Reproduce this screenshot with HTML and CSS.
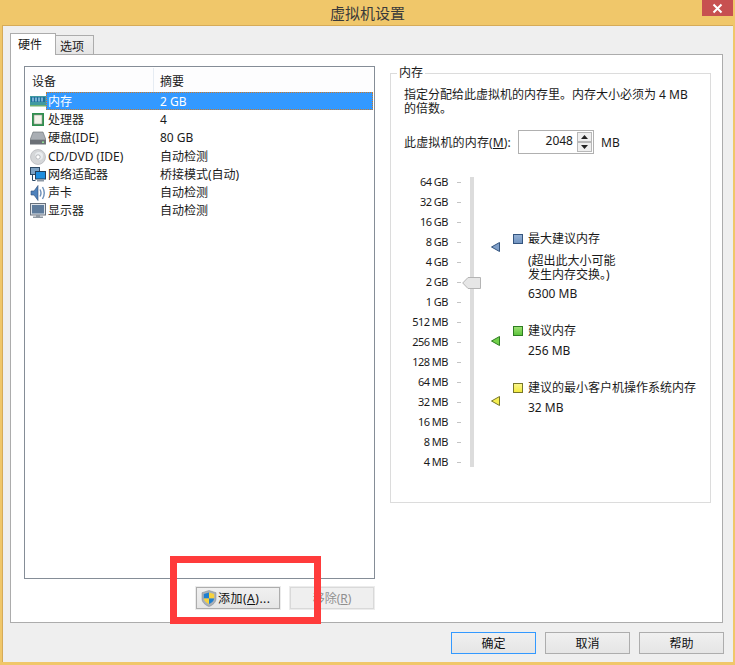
FILE: index.html
```html
<!DOCTYPE html>
<html lang="zh-CN">
<head>
<meta charset="utf-8">
<title>虚拟机设置</title>
<link rel="stylesheet" href="styles.css">
</head>
<body>
<div class="window">
  <header class="titlebar">
    <span class="title">虚拟机设置</span>
    <span class="close"><svg width="11" height="11" viewBox="0 0 11 11"><path d="M1.5 1.5l8 8M9.5 1.5l-8 8" stroke="#fff" stroke-width="2" fill="none"/></svg></span>
  </header>
  <div class="client">
    <div class="tabs">
      <div class="tab active">硬件</div>
      <div class="tab">选项</div>
    </div>
    <div class="panel">
      <div class="left">
        <div class="list">
          <div class="list-head"><span class="col-a">设备</span><span class="col-b">摘要</span></div>
          <div class="row selected">
            <svg class="ico" viewBox="0 0 16 16"><rect x="0" y="2" width="16" height="9" fill="#3f9aa0"/><rect x="1" y="3" width="14" height="5" fill="#1f6f9c"/><path d="M3 3.500v4M6 3.500v4M9 3.500v4M12 3.500v4" stroke="#9fd0e8" stroke-width="1.400"/><path d="M0 11h16v1.500H0z" fill="#6fb06f"/></svg>
            <span class="name">内存</span><span class="val">2 GB</span>
          </div>
          <div class="row">
            <svg class="ico" viewBox="0 0 16 16"><rect x="2" y="1" width="12" height="13" fill="#2f8f4f"/><rect x="4" y="3" width="8" height="9" fill="#f2f2ea" stroke="#9a9a90" stroke-width=".6"/></svg>
            <span class="name">处理器</span><span class="val">4</span>
          </div>
          <div class="row">
            <svg class="ico" viewBox="0 0 16 16"><path d="M3 2h10l3 8H0z" fill="#a9aeb4" stroke="#666b70" stroke-width=".6"/><rect x="0" y="10" width="16" height="4.500" fill="#6b7076"/><rect x="12" y="11.500" width="2" height="1.500" fill="#8fe08f"/></svg>
            <span class="name">硬盘(IDE)</span><span class="val">80 GB</span>
          </div>
          <div class="row">
            <svg class="ico" viewBox="0 0 16 16"><circle cx="8" cy="8" r="7.500" fill="#d4d6d8" stroke="#a8aaae" stroke-width=".6"/><circle cx="9" cy="7" r="4" fill="#e9ecef"/><circle cx="8" cy="8" r="2.200" fill="#fff" stroke="#9a9ca0" stroke-width=".7"/></svg>
            <span class="name">CD/DVD (IDE)</span><span class="val">自动检测</span>
          </div>
          <div class="row">
            <svg class="ico" viewBox="0 0 16 16"><rect x=".5" y=".5" width="9" height="7" fill="#7fa3c4" stroke="#2d4a66"/><path d="M2.500 8v5.500h3" stroke="#2d4a66" fill="none"/><rect x="5.500" y="4.500" width="10" height="7.500" fill="#1f8fe0" stroke="#24405c"/><rect x="7" y="12.500" width="7" height="2" fill="#8d99a6"/></svg>
            <span class="name">网络适配器</span><span class="val">桥接模式(自动)</span>
          </div>
          <div class="row">
            <svg class="ico" viewBox="0 0 16 16"><path d="M1 6h3l4-5.500v15L4 10H1z" fill="#4f82bc" stroke="#2d4a76" stroke-width=".6"/><path d="M10 4.500q2 3.500 0 7M12.500 2q3.500 6 0 12" stroke="#6c8fb8" stroke-width="1.400" fill="none"/></svg>
            <span class="name">声卡</span><span class="val">自动检测</span>
          </div>
          <div class="row">
            <svg class="ico" viewBox="0 0 16 16"><rect x="0.500" y="0.500" width="15" height="11.500" fill="#dfe4ea" stroke="#68717c"/><rect x="2" y="2" width="12" height="8.500" fill="#5f7c9c"/><path d="M6 12h4v1.500H6zM3 13.500h10V15H3z" fill="#8f98a2"/></svg>
            <span class="name">显示器</span><span class="val">自动检测</span>
          </div>
        </div>
        <div class="list-actions">
          <button class="btn add" type="button">
            <svg width="16" height="17" viewBox="0 0 16 17"><path d="M8 .5l7 2.200v6c0 3.500-3 6.300-7 7.800-4-1.500-7-4.300-7-7.800v-6z" fill="#aab0b8" stroke="#7d848c" stroke-width=".5"/><path d="M8 2.500v6H2.800V4z" fill="#1f7fd0"/><path d="M8 2.500V8.500h5.200V4z" fill="#f7d23e"/><path d="M8 8.500H2.800c.3 2.500 2.500 4.400 5.200 5.500z" fill="#f7d23e"/><path d="M8 8.500h5.200c-.3 2.500-2.500 4.400-5.200 5.500z" fill="#1f7fd0"/></svg>
            <span class="add-label">添加(<u>A</u>)...</span>
          </button>
          <button class="btn" type="button" disabled>移除(<u>R</u>)</button>
        </div>
      </div>
      <fieldset class="group">
        <legend>内存</legend>
        <p class="desc">指定分配给此虚拟机的内存里。内存大小必须为 4 MB<br>的倍数。</p>
        <div class="mem-row">
          <span class="mem-label">此虚拟机的内存(<u>M</u>):</span>
          <div class="spin">
            <span class="spin-val">2048</span>
            <span class="spin-btns">
              <span class="spin-btn"><svg width="7" height="4" viewBox="0 0 7 4"><path d="M3.500 0L7 4H0z" fill="#222"/></svg></span>
              <span class="spin-btn"><svg width="7" height="4" viewBox="0 0 7 4"><path d="M3.500 4L7 0H0z" fill="#222"/></svg></span>
            </span>
          </div>
          <span class="mem-unit">MB</span>
        </div>
        <div class="slider">
          <div class="scale">
            <div class="tick-row"><span>64 GB</span><i></i></div>
            <div class="tick-row"><span>32 GB</span><i></i></div>
            <div class="tick-row"><span>16 GB</span><i></i></div>
            <div class="tick-row"><span>8 GB</span><i></i></div>
            <div class="tick-row"><span>4 GB</span><i></i></div>
            <div class="tick-row"><span>2 GB</span><i></i></div>
            <div class="tick-row"><span>1 GB</span><i></i></div>
            <div class="tick-row"><span>512 MB</span><i></i></div>
            <div class="tick-row"><span>256 MB</span><i></i></div>
            <div class="tick-row"><span>128 MB</span><i></i></div>
            <div class="tick-row"><span>64 MB</span><i></i></div>
            <div class="tick-row"><span>32 MB</span><i></i></div>
            <div class="tick-row"><span>16 MB</span><i></i></div>
            <div class="tick-row"><span>8 MB</span><i></i></div>
            <div class="tick-row"><span>4 MB</span><i></i></div>
          </div>
          <div class="track">
            <svg class="thumb" width="19" height="12" viewBox="0 0 19 12"><path d="M.7 6L6 .5h12.500v11H6z" fill="#e6e6e6" stroke="#b4b4b4"/></svg>
          </div>
          <div class="markers">
            <svg class="mark m-max" width="9" height="10" viewBox="0 0 9 10"><path d="M.5 5L8.500.5v9z" fill="#7f9fc8" stroke="#34557f"/></svg>
            <svg class="mark m-rec" width="9" height="10" viewBox="0 0 9 10"><path d="M.5 5L8.500.5v9z" fill="#72d04a" stroke="#2e7d22"/></svg>
            <svg class="mark m-min" width="9" height="10" viewBox="0 0 9 10"><path d="M.5 5L8.500.5v9z" fill="#f5ee50" stroke="#77772a"/></svg>
          </div>
          <div class="legend-col">
            <div class="item i-max">
              <div class="item-title"><b class="sq blue"></b>最大建议内存</div>
              <p class="note">(超出此大小可能<br>发生内存交换。)</p>
              <p class="amount first">6300 MB</p>
            </div>
            <div class="item i-rec">
              <div class="item-title"><b class="sq green"></b>建议内存</div>
              <p class="amount">256 MB</p>
            </div>
            <div class="item i-min">
              <div class="item-title"><b class="sq yellow"></b>建议的最小客户机操作系统内存</div>
              <p class="amount">32 MB</p>
            </div>
          </div>
        </div>
      </fieldset>
    </div>
    <div class="footer">
      <button class="btn default" type="button">确定</button>
      <button class="btn" type="button">取消</button>
      <button class="btn" type="button">帮助</button>
    </div>
  </div>
  <div class="annotation"></div>
</div>
</body>
</html>
```
FILE: styles.css
```css
* { box-sizing: border-box; }
html, body { margin: 0; padding: 0; }
body {
  width: 735px;
  height: 665px;
  overflow: hidden;
  font: 12px/14px "Noto Sans", "Noto Sans CJK SC", sans-serif;
  color: #1a1a1a;
}
p { margin: 0; }
u { text-underline-offset: 1px; }

.window {
  position: relative;
  width: 735px;
  height: 665px;
  background: #f0c76a;
  display: flex;
  flex-direction: column;
}
.titlebar {
  position: relative;
  height: 25px;
  flex: none;
  display: flex;
  align-items: center;
  justify-content: center;
}
.title { font-size: 15px; color: #3a3a3a; margin-top: 1px; }
.close {
  position: absolute;
  top: 0;
  right: 2px;
  width: 31px;
  height: 16px;
  background: #c75050;
  display: flex;
  align-items: center;
  justify-content: center;
}
.client {
  flex: 1;
  margin: 0 2px 3px 2px;
  padding: 7px 9px 0 7px;
  background: #efefef;
  border-left: 1px solid #d6ab58;
  border-top: 1px solid #d6ab58;
  display: flex;
  flex-direction: column;
}
.tabs { display: flex; align-items: flex-end; height: 21px; flex: none; }
.tab {
  width: 38px;
  height: 19px;
  border: 1px solid #acacac;
  border-left: 0;
  border-bottom: 0;
  background: linear-gradient(#f0f0f0, #e5e5e5);
  padding-left: 4px;
  line-height: 21px;
}
.tab.active {
  width: 46px;
  height: 22px;
  border-left: 1px solid #acacac;
  margin-bottom: -1px;
  background: #fff;
  padding-left: 7px;
  line-height: 21px;
  position: relative;
  z-index: 1;
}
.panel {
  width: 713px;
  height: 569px;
  flex: none;
  background: #fff;
  border: 1px solid #acacac;
  padding: 11px 0 0 13px;
  display: flex;
  align-items: flex-start;
}
.left { width: 351px; flex: none; }
.list {
  height: 513px;
  border: 1px solid #858d97;
  padding: 1px;
}
.list-head {
  height: 24px;
  display: flex;
  align-items: center;
  background: #fdfdfe;
}
.col-a { width: 128px; padding-left: 6px; border-right: 1px solid #e6ecf3; height: 24px; line-height: 28px; }
.col-b { padding-left: 6px; line-height: 28px; height: 24px; }
.row {
  height: 18.200px;
  padding-top: 2px;
  display: flex;
  align-items: center;
  position: relative;
}
.ico { width: 16px; height: 16px; margin-left: 4px; flex: none; position: relative; z-index: 1; }
.name { margin-left: 2px; flex: none; white-space: nowrap; }
.val { position: absolute; left: 134px; white-space: nowrap; }
.row.selected { color: #fff; }
.row.selected::before {
  content: "";
  position: absolute;
  left: 20px;
  right: 0;
  top: 0;
  bottom: 0;
  background: #3399ff;
  outline: 1px dotted #c97a2a;
  outline-offset: -1px;
}
.row.selected .name { position: relative; z-index: 1; }
.row.selected .val { z-index: 1; }

.list-actions { display: flex; justify-content: flex-end; gap: 10px; margin: 8px 1px 0 0; }
.btn {
  width: 85px;
  height: 22px;
  padding: 1px 0 0;
  font: inherit;
  color: #111;
  border: 1px solid #adadad;
  background: linear-gradient(#f0f0f0, #e5e5e5);
  display: flex;
  align-items: center;
  justify-content: center;
}
.list-actions .btn { width: 84px; box-shadow: 0 0 0 1px #ececec; }
.btn:disabled { color: #8f8f8f; background: #efefef; border-color: #d9d9d9; }
.list-actions .add { justify-content: flex-start; padding-left: 4px; }
.add-label { margin-left: 1px; letter-spacing: .5px; white-space: nowrap; }
.footer { display: flex; justify-content: flex-end; gap: 9px; margin-top: 9px; }
.default { border-color: #3399ff; }

.group {
  width: 321px;
  height: 437px;
  margin: 0 0 0 15px;
  padding: 0;
  border: 1px solid #dcdcdc;
}
.group legend { margin-left: 6px; padding: 0 2px; line-height: 14px; }
.desc { margin: 8px 0 0 13px; white-space: nowrap; }
.mem-row { display: flex; align-items: center; margin: 14px 0 0 13px; height: 24px; }
.mem-label { width: 114px; flex: none; padding-top: 2px; letter-spacing: .15px; white-space: nowrap; }
.spin {
  width: 76px;
  height: 24px;
  border: 1px solid #b0b0b0;
  display: flex;
  align-items: center;
  justify-content: flex-end;
  padding-right: 1px;
}
.spin-val { margin: 0 4px 2px 0; }
.spin-btns { display: flex; flex-direction: column; }
.spin-btn {
  width: 15px;
  height: 10px;
  border: 1px solid #b8b8b8;
  background: #efefef;
  display: flex;
  align-items: center;
  justify-content: center;
}
.mem-unit { margin-left: 7px; padding-top: 2px; }

.slider { display: flex; margin-top: 18px; height: 300px; }
.scale { width: 70px; flex: none; }
.tick-row { height: 20px; display: flex; align-items: center; justify-content: flex-end; font-size: 11px; letter-spacing: -.5px; }
.tick-row span { margin-right: 9px; white-space: nowrap; }
.tick-row i { width: 4px; height: 1px; background: #c4c4c4; }
.track {
  width: 4px;
  height: 290px;
  margin: 5px 0 0 9px;
  background: #dcdcdc;
  flex: none;
  position: relative;
}
.thumb { position: absolute; left: -8px; top: 100px; }
.markers { width: 9px; margin-left: 17px; flex: none; display: flex; flex-direction: column; }
.mark { display: block; flex: none; }
.m-max { margin-top: 70px; }
.m-rec { margin-top: 84px; }
.m-min { margin-top: 50px; }
.legend-col { margin-left: 13px; flex: none; }
.item-title { display: flex; align-items: center; white-space: nowrap; }
.sq { width: 10px; height: 10px; border: 1px solid #444; margin-right: 5px; flex: none; }
.sq.blue { background: linear-gradient(#93b0d4, #7294c0); border-color: #34557f; }
.sq.green { background: linear-gradient(#9ce072, #5cc43c); border-color: #2e7d22; }
.sq.yellow { background: linear-gradient(#fbf68a, #f2ea40); border-color: #77772a; }
.note, .amount { margin-left: 15px; }
.note { margin-top: 8px; }
.amount { margin-top: 6px; white-space: nowrap; }
.amount.first { margin-top: 5px; }
.i-max { margin-top: 60px; }
.i-rec { margin-top: 23px; }
.i-min { margin-top: 23px; }

.annotation {
  position: absolute;
  left: 170px;
  top: 556px;
  width: 151px;
  height: 68px;
  border: 7px solid #ff3b3b;
  pointer-events: none;
}
```
